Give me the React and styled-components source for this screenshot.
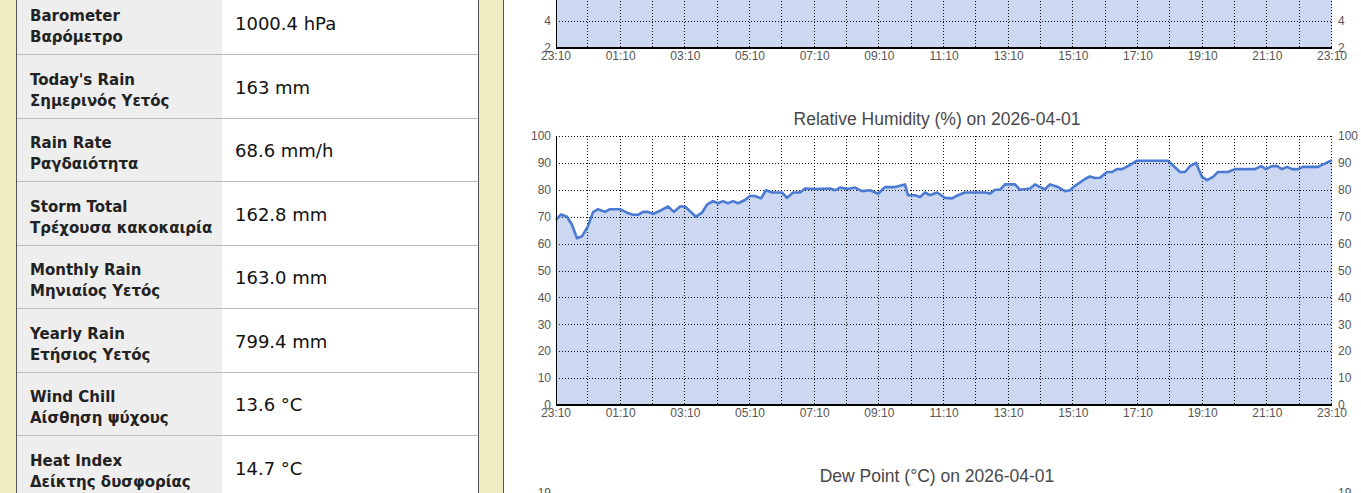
import React from 'react'
import styled, { createGlobalStyle } from 'styled-components'

const GlobalStyle = createGlobalStyle`
  html, body {
    margin: 0;
    padding: 0;
    overflow: hidden;
    background: #fff;
  }
`

const Page = styled.div`
  display: flex;
  height: 493px;
  overflow: hidden;
`
const Gutter = styled.div`
  flex: 0 0 ${props => props.$width}px;
  background: #f1edc2;
  border-right: 1px solid #555;
`
const Table = styled.div`
  flex: 0 0 461px;
  align-self: flex-start;
  margin-top: -8.5px;
  border-right: 1px solid #555;
  font-family: "DejaVu Sans", Verdana, sans-serif;
`
const Row = styled.div`
  display: grid;
  grid-template-columns: 205px 1fr;
  height: 63.5px;
  box-sizing: border-box;
  border-bottom: 1px solid #bbb;
`
const Label = styled.div`
  display: flex;
  flex-direction: column;
  justify-content: center;
  padding: 9px 0 0 13px;
  background: #eee;
  font-size: 15px;
  font-weight: bold;
  line-height: 21px;
  color: #222;
`
const Value = styled.div`
  display: flex;
  align-items: center;
  padding: 2px 0 0 13px;
  background: #fff;
  font-size: 18px;
  color: #111;
`
const Charts = styled.div`
  flex: 1;
  min-width: 0;
  overflow: hidden;
  margin-top: -248px;
`
const ChartBlock = styled.div`
  width: 866px;
  height: 357px;
  font-family: "Liberation Sans", Arial, sans-serif;
`
const Title = styled.div`
  height: 20px;
  line-height: 20px;
  text-align: center;
  font-size: 17.5px;
  color: #484848;
`
const Plot = styled.svg`
  display: block;
  font-family: "Liberation Sans", Arial, sans-serif;
  font-size: 12px;

  text {
    fill: #555;
  }
`

const readings = [
  ['Barometer', 'Βαρόμετρο', '1000.4 hPa'],
  ["Today's Rain", 'Σημερινός Υετός', '163 mm'],
  ['Rain Rate', 'Ραγδαιότητα', '68.6 mm/h'],
  ['Storm Total', 'Τρέχουσα κακοκαιρία', '162.8 mm'],
  ['Monthly Rain', 'Μηνιαίος Υετός', '163.0 mm'],
  ['Yearly Rain', 'Ετήσιος Υετός', '799.4 mm'],
  ['Wind Chill', 'Αίσθηση ψύχους', '13.6 °C'],
  ['Heat Index', 'Δείκτης δυσφορίας', '14.7 °C'],
]

// [x offset in plot px, value]
const humidity = [
  [0, 68.8], [5, 70.8], [11, 70], [16, 67], [21, 62], [26, 62.7], [32, 66.5],
  [37, 71.7], [42, 72.8], [49, 71.8], [54, 72.8], [64, 72.8], [71, 71.5],
  [77, 70.7], [82, 70.7], [87, 71.8], [92, 71.8], [97, 71], [103, 72],
  [112, 73.8], [118, 71.8], [124, 73.8], [129, 73.8], [140, 70], [146, 71.5],
  [151, 74.5], [157, 75.8], [162, 75], [167, 75.8], [172, 75], [177, 75.8],
  [182, 75], [189, 76.2], [194, 77.7], [199, 77.7], [205, 76.8], [210, 79.8],
  [216, 79], [226, 79], [231, 77], [237, 79], [244, 79], [249, 80.5],
  [259, 80.3], [274, 80.5], [279, 79.8], [284, 80.8], [292, 80.3], [299, 80.8],
  [306, 79.5], [314, 79.8], [322, 78.5], [329, 81], [339, 81], [349, 82],
  [352, 78], [359, 78], [364, 77.3], [369, 79], [374, 78], [381, 79],
  [389, 77], [396, 76.8], [402, 78], [409, 79], [429, 79], [434, 78.6],
  [439, 80], [444, 80], [449, 82], [459, 82], [464, 80], [474, 80.5],
  [479, 82], [484, 81], [489, 80.2], [494, 82], [502, 81], [509, 79.5],
  [514, 79.8], [519, 81.5], [529, 84], [534, 85], [539, 84.4], [544, 84.5],
  [551, 86.6], [556, 86.6], [561, 87.7], [566, 87.7], [572, 88.8], [581, 90.8],
  [612, 90.8], [624, 86.6], [629, 86.6], [634, 88.8], [640, 90], [646, 84.8],
  [651, 83.6], [657, 84.8], [662, 86.6], [672, 86.6], [679, 87.7], [699, 87.7],
  [705, 88.8], [710, 87.7], [716, 88.8], [721, 88.8], [726, 87.7], [731, 88.5],
  [736, 87.7], [742, 87.7], [747, 88.5], [762, 88.5], [776, 91],
]

const temperature = Array.from({ length: 49 }, (_, i) => [
  i * 16.17,
  14 + 1.6 * Math.sin(i / 7) - (i > 30 ? 0.04 * (i - 30) : 0),
])

const dewPoint = Array.from({ length: 49 }, (_, i) => [
  i * 16.17,
  11.5 + 0.8 * Math.sin(i / 9),
])

const LEFT = 52
const TOP = 7
const W = 776
const H = 269
const HOURS = ['23:10', '01:10', '03:10', '05:10', '07:10', '09:10', '11:10',
  '13:10', '15:10', '17:10', '19:10', '21:10', '23:10']

const Chart = ({ title, data, min, max, step }) => {
  const y = v => TOP + ((max - v) / (max - min)) * H
  const bottom = TOP + H
  const ticks = []
  for (let v = min; v <= max + 1e-6; v += step) ticks.push(v)

  const line = data.map(([x, v], i) => `${i ? 'L' : 'M'}${LEFT + x},${y(v).toFixed(1)}`).join(' ')
  const area = `${line} L${LEFT + W},${bottom} L${LEFT},${bottom} Z`

  return (
    <ChartBlock>
      <Title>{title}</Title>
      <Plot width="866" height="337">
        <path d={area} fill="#ccd8f1" />
        {ticks.slice(1).map(v => (
          <line key={v} x1={LEFT} x2={LEFT + W} y1={Math.round(y(v)) + 0.5} y2={Math.round(y(v)) + 0.5}
            stroke="#111" strokeDasharray="1 2" />
        ))}
        {Array.from({ length: 24 }, (_, i) => {
          const x = Math.round(LEFT + ((i + 1) * W) / 24) - 0.5
          return <line key={i} x1={x} x2={x} y1={TOP} y2={bottom} stroke="#111" strokeDasharray="1 2" />
        })}
        <path d={line} fill="none" stroke="#4a7ad2" strokeWidth="2.6" strokeLinejoin="round" />
        <line x1={LEFT + 0.5} x2={LEFT + 0.5} y1={TOP} y2={bottom} stroke="#000" />
        <line x1={LEFT} x2={LEFT + W} y1={bottom} y2={bottom} stroke="#000" strokeWidth="2" />
        {ticks.map(v => (
          <g key={v}>
            <text x={LEFT - 5} y={y(v)} dy="0.35em" textAnchor="end">{v}</text>
            <text x={LEFT + W + 6} y={y(v)} dy="0.35em">{v}</text>
          </g>
        ))}
        {HOURS.map((h, i) => (
          <text key={i} x={LEFT + (i * W) / 12} y={bottom + 12} textAnchor="middle">{h}</text>
        ))}
      </Plot>
    </ChartBlock>
  )
}

const App = () => (
  <>
    <GlobalStyle />
    <Page>
      <Gutter $width={16} />
      <Table>
        {readings.map(([en, el, value]) => (
          <Row key={en}>
            <Label>
              <span>{en}</span>
              <span>{el}</span>
            </Label>
            <Value>{value}</Value>
          </Row>
        ))}
      </Table>
      <Gutter $width={24} />
      <Charts>
        <Chart title="Temperature (°C) on 2026-04-01" data={temperature} min={2} max={22} step={2} />
        <Chart title="Relative Humidity (%) on 2026-04-01" data={humidity} min={0} max={100} step={10} />
        <Chart title="Dew Point (°C) on 2026-04-01" data={dewPoint} min={9} max={19} step={1} />
      </Charts>
    </Page>
  </>
)

export default App
